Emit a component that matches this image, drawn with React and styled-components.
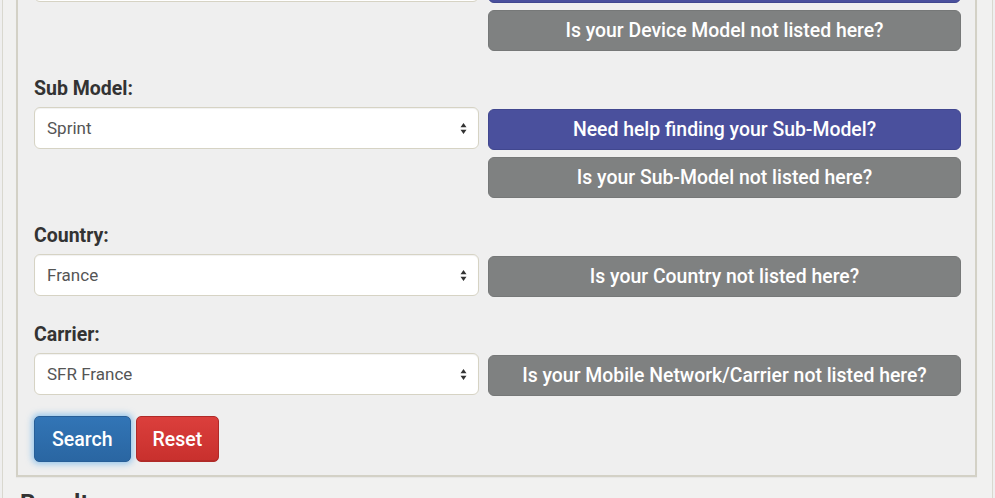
import React from 'react';
import styled, { createGlobalStyle } from 'styled-components';

const GlobalStyle = createGlobalStyle`
	html, body {
		margin: 0;
		padding: 0;
		background: #efefef;
		overflow: hidden;
	}
	body {
		font-family: Roboto, "Liberation Sans", Arial, sans-serif;
		color: #333;
	}
`;

const Page = styled.div`
	margin: -87px 2px 0 2px;
	padding: 0 15px 40px 13px;
	border-left: 1px solid #d9d8cf;
	border-right: 1px solid #d9d8cf;
	background: #f1f1f0;
`;

const Fieldset = styled.div`
	border: 2px solid #d3d1c6;
	background: #efefef;
	padding: 16px 14px 13px 16px;
	box-shadow: 0 1px 1px rgba(0, 0, 0, 0.04);
`;

const Group = styled.div`
	margin-bottom: ${p => (p.$last ? 0 : 27)}px;
`;

const Label = styled.div`
	font-size: 19.5px;
	font-weight: 700;
	line-height: 22px;
	color: #333;
	margin-bottom: 7px;
`;

const Row = styled.div`
	display: grid;
	grid-template-columns: 445px 1fr;
	column-gap: 9px;
	align-items: start;
`;

const Select = styled.div`
	display: flex;
	align-items: center;
	justify-content: space-between;
	box-sizing: border-box;
	height: 42px;
	padding: 0 11px 0 12px;
	background: #fff;
	border: 1px solid #d6d3c4;
	border-radius: 6px;
	box-shadow: inset 0 1px 1px rgba(0, 0, 0, 0.06);
	font-size: 17px;
	color: #555;
`;

const Helpers = styled.div`
	display: flex;
	flex-direction: column;
	gap: 7px;
	padding-top: 2px;
`;

const HelpButton = styled.button`
	box-sizing: border-box;
	height: 41px;
	width: 100%;
	border: 1px solid ${p => (p.$kind === 'help' ? '#41478f' : '#767878')};
	border-radius: 6px;
	background: ${p => (p.$kind === 'help' ? '#4a509d' : '#7f8181')};
	color: #fff;
	font-family: Roboto, "Liberation Sans", Arial, sans-serif;
	font-size: 19.4px;
	font-weight: 500;
	cursor: pointer;
	padding: 0;
`;

const Actions = styled.div`
	display: flex;
	gap: 5px;
	margin-top: 20px;
`;

const ActionButton = styled.button`
	box-sizing: border-box;
	height: 46px;
	padding: 0 ${p => p.$pad}px;
	border-radius: 5px;
	font-family: Roboto, "Liberation Sans", Arial, sans-serif;
	font-size: 19.5px;
	font-weight: 500;
	color: #fff;
	cursor: pointer;
	border: 1px solid ${p => (p.$variant === 'primary' ? '#285f98' : '#b02a28')};
	background: ${p =>
		p.$variant === 'primary'
			? 'linear-gradient(#3275b6, #2a66a2)'
			: 'linear-gradient(#db3f3c, #c8302d)'};
	box-shadow: ${p =>
		p.$variant === 'primary'
			? '0 0 6px 2px rgba(102, 175, 233, 0.65)'
			: 'inset 0 -1px 0 rgba(0, 0, 0, 0.1)'};
`;

const Results = styled.h3`
	margin: 12px 0 0 4px;
	font-size: 24px;
	font-weight: 700;
	line-height: 28px;
	color: #333;
`;

const Arrows = () => (
	<svg width="7" height="13" viewBox="0 0 7 13">
		<path d="M0.5 5.2 L3.5 1 L6.5 5.2 Z M0.5 7.8 L3.5 12 L6.5 7.8 Z" fill="#333" />
	</svg>
);

const fields = [
	{
		label: 'Device Model:',
		value: 'Galaxy S7 Edge',
		help: 'Need help finding your Device Model?',
		missing: 'Is your Device Model not listed here?'
	},
	{
		label: 'Sub Model:',
		value: 'Sprint',
		help: 'Need help finding your Sub-Model?',
		missing: 'Is your Sub-Model not listed here?'
	},
	{
		label: 'Country:',
		value: 'France',
		missing: 'Is your Country not listed here?'
	},
	{
		label: 'Carrier:',
		value: 'SFR France',
		missing: 'Is your Mobile Network/Carrier not listed here?'
	}
];

const App = () => (
	<>
		<GlobalStyle />
		<Page>
			<Fieldset>
				{fields.map((f, i) => (
					<Group key={f.label} $last={i === fields.length - 1}>
						<Label>{f.label}</Label>
						<Row>
							<Select>
								<span>{f.value}</span>
								<Arrows />
							</Select>
							<Helpers>
								{f.help && <HelpButton $kind="help">{f.help}</HelpButton>}
								<HelpButton $kind="missing">{f.missing}</HelpButton>
							</Helpers>
						</Row>
					</Group>
				))}
				<Actions>
					<ActionButton $variant="primary" $pad={17}>Search</ActionButton>
					<ActionButton $variant="danger" $pad={16}>Reset</ActionButton>
				</Actions>
			</Fieldset>
			<Results>Results</Results>
		</Page>
	</>
);

export default App;
